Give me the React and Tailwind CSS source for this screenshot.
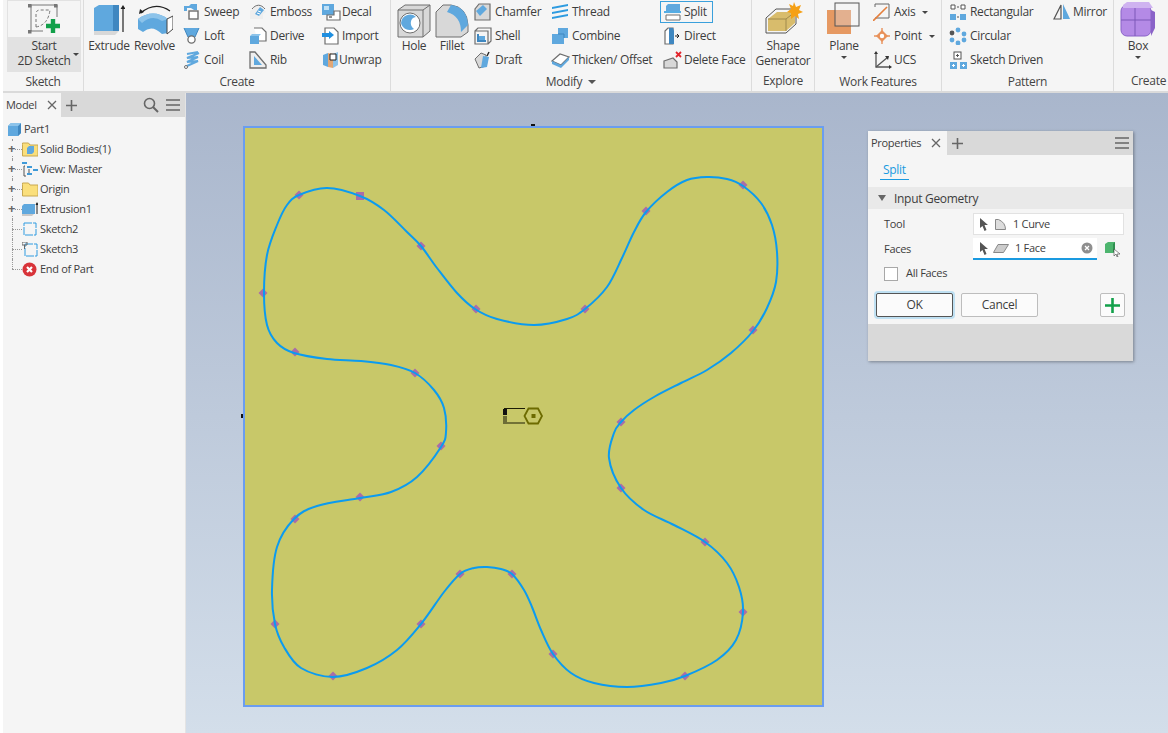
const FONT = "font-['Open_Sans','Noto_Sans',sans-serif]"

const PTS = [
  [299,195],[327,188],[360,196],[384,210],[407,232],[421,246],[437,268],[457,293],[475,309],[497,319],[534,325],[567,319],[585,309],[607,287],[622,258],[634,232],[646,212],[667,192],[687,180],[707,177],[727,179],[743,186],[761,203],[772,225],[777,252],[776,282],[767,308],[753,331],[731,353],[707,370],[681,383],[654,397],[634,410],[621,422],[614,433],[609,458],[621,488],[644,510],[674,525],[705,542],[727,563],[739,587],[743,612],[736,640],[717,660],[685,676],[661,683],[627,687],[594,683],[571,673],[553,654],[541,630],[532,607],[524,590],[512,574],[501,569],[487,567],[474,568],[460,574],[444,592],[421,624],[397,650],[367,668],[333,677],[301,668],[284,647],[275,624],[272,590],[277,547],[294,519],[317,506],[360,498],[391,492],[417,477],[441,447],[446,432],[444,408],[434,390],[415,373],[391,365],[361,361],[327,359],[294,353],[277,343],[267,325],[264,293],[267,255],[277,225],[287,205],
]
const DIAMONDS = [[299,195],[421,246],[476,309],[585,309],[646,211],[743,185],[753,330],[621,422],[621,488],[705,542],[743,612],[685,676],[553,654],[512,574],[460,574],[421,624],[333,676],[275,624],[295,519],[360,497],[441,446],[415,373],[295,352],[263,293]]

function closedSpline(p) {
  const n = p.length
  let d = `M${p[0][0]} ${p[0][1]}`
  for (let i = 0; i < n; i++) {
    const a = p[(i - 1 + n) % n], b = p[i], c = p[(i + 1) % n], e = p[(i + 2) % n]
    d += `C${b[0] + (c[0] - a[0]) / 6} ${b[1] + (c[1] - a[1]) / 6} ${c[0] - (e[0] - b[0]) / 6} ${c[1] - (e[1] - b[1]) / 6} ${c[0]} ${c[1]}`
  }
  return d + 'Z'
}

const I = ({ w = 18, h = 18, children, className = '' }) => (
  <svg width={w} height={h} viewBox={`0 0 ${w} ${h}`} className={`shrink-0 ${className}`}>{children}</svg>
)
const B = '#5fa8de', D = '#3f87c0', G = '#6e6e6e', L = '#d8d8d8'

const icons = {
  sweep: <I><path d="M1 3h5l2-2h6v6h-3L8 5H4v3H1z" fill={B}/><rect x="6" y="8" width="9" height="8" fill="#fff" stroke={G} strokeWidth="1.4"/></I>,
  loft: <I><path d="M1 1h15l-4 9H5z" fill={B}/><path d="M1 1l4 9M16 1l-4 9" stroke={D}/><circle cx="8.5" cy="12.5" r="3.6" fill="#fff" stroke={G} strokeWidth="1.3"/></I>,
  coil: <I><path d="M4 3l11-2M16 2L4 7l11-1-11 5 11-1-11 5" fill="none" stroke={B} strokeWidth="2"/><circle cx="3" cy="16" r="1.5" fill="#fff" stroke={G}/></I>,
  emboss: <I><path d="M1 8L10 1l7 8-3 2v5H1z" fill="#eee"/><path d="M3 6c4-5 9-5 13 0" fill="none" stroke={G}/><path d="M6 11l5-7 4 3-5 6z" fill={B}/><path d="M9 8l3 1M8 10l3 1" stroke="#fff"/></I>,
  derive: <I><path d="M5 1h8l4 4v9H9" fill="#fff" stroke={G} strokeWidth="1.2"/><path d="M1 9h9v8H1z" fill={B}/><path d="M1 9l2-2h9l-2 2z" fill="#8cc3ea"/></I>,
  rib: <I><path d="M1 1h5l11 13v3H1z" fill="#eee" stroke={G} strokeWidth="1.3"/><path d="M5 5l8 9H5z" fill={B}/></I>,
  decal: <I w={20}><rect x="1" y="1" width="12" height="11" fill={B}/><rect x="3" y="3" width="5" height="4" fill="#bfe0f5"/><path d="M13 8h6v9H6v-5h7z" fill="#fff" stroke={G} strokeWidth="1.2"/><path d="M8 14h3" stroke="#222"/></I>,
  import: <I><path d="M4 1h9l4 4v12H4z" fill="#fff" stroke={G} strokeWidth="1.2"/><rect x="1" y="6" width="9" height="4" fill="#1f8fe0"/><path d="M8 4l5 4-5 4z" fill="#1f8fe0"/></I>,
  unwrap: <I><path d="M2 4l5-2v14l-5-2z" fill={B}/><path d="M7 2l5 1v14l-5-1z" fill="#e2a775"/><path d="M12 3l5-2v13l-5 3z" fill="#8cc3ea"/><path d="M9 3h6v6H9z" fill="#fff" stroke="#222"/></I>,
  chamfer: <I><path d="M5 1h11v16H1V6z" fill={L} stroke={G} strokeWidth="1.2"/><path d="M2 8l7-6 4 4-7 7z" fill={B}/></I>,
  shell: <I><path d="M1 4h13v13H1zM1 4l3-3h13v13l-3 3" fill="#f5f5f5" stroke={G} strokeWidth="1.2"/><path d="M3 7h2v6h7v2H3z" fill={D}/><rect x="5" y="9" width="6" height="4" fill={B}/></I>,
  draft: <I><path d="M1 8l6-6 5 2v11l-7 2z" fill={L} stroke={G}/><path d="M9 5l6 1-2 10-6 1z" fill={B}/><path d="M13 5l2-4" stroke="#222" strokeWidth="1.4"/></I>,
  thread: <I><path d="M1 4l16-3v2L1 6zM1 9l16-3v2L1 11zM1 14l16-3v2L1 16z" fill="#2e9be0"/></I>,
  combine: <I><path d="M7 1h10v10h-4v6H1V7h6z" fill={B}/><path d="M7 7h6v4" stroke={D} fill="none"/></I>,
  thicken: <I w={20}><path d="M1 10l8-7 9 3-8 8z" fill="#fff" stroke={G} strokeWidth="1.2"/><path d="M1 10v3l9 4 8-8V6l-8 8z" fill={B}/></I>,
  split: <I w={20}><path d="M3 3l2-2h12v7H3z" fill={B}/><path d="M1 9h17" stroke="#2e9be0" strokeWidth="1.6"/><path d="M3 12h14v5H3z" fill="#fff" stroke={G}/></I>,
  direct: <I><path d="M2 4l3-3h5v16H2z" fill="#fff" stroke={G} strokeWidth="1.2"/><path d="M6 1h4l1 3v13H6z" fill={D}/><path d="M12 9h4M14 7l2 2-2 2" stroke="#222" fill="none"/></I>,
  deleteFace: <I w={20}><path d="M1 10l9-3 4 4v6H1z" fill={L} stroke={G} strokeWidth="1.2"/><path d="M13 1l5 5M18 1l-5 5" stroke="#e3252c" strokeWidth="1.8"/></I>,
  axis: <I><path d="M2 4V1h14v14H2" fill="none" stroke="#666"/><path d="M0 18L14 4" stroke="#e57f3c" strokeWidth="1.6"/></I>,
  point: <I><path d="M9 1v16M1 9h16" stroke="#e8915a" strokeWidth="1.4"/><path d="M9 3l6 6-6 6-6-6z" fill="#e8915a"/><circle cx="9" cy="9" r="2.2" fill="#fff"/></I>,
  ucs: <I w={20} h={20}><path d="M3 3v14h14" fill="none" stroke="#555" strokeWidth="1.3"/><path d="M3 17L15 7" stroke="#555" strokeWidth="1.3"/><path d="M1 4l2-3 2 3zM16 15l3 2-3 2zM12 6l4 0-1 4z" fill="#333"/></I>,
  rectangular: <I><path d="M2 2h4v4H2zM12 2h4v4h-4z" fill="#fff" stroke="#555"/><rect x="11" y="11" width="6" height="6" fill={B}/><rect x="1" y="11" width="6" height="6" fill={B}/><path d="M8 4h2M8 14h2" stroke="#555"/></I>,
  circular: <I><circle cx="9" cy="3" r="2.4" fill={B}/><circle cx="15" cy="7" r="2.4" fill={B}/><circle cx="15" cy="13" r="2.4" fill={B}/><circle cx="9" cy="16" r="2.4" fill={B}/><circle cx="3" cy="13" r="2.4" fill={B}/><circle cx="3" cy="6" r="2.4" fill="#555"/></I>,
  driven: <I w={20}><rect x="5" y="1" width="7" height="7" fill="#fff" stroke="#555"/><path d="M7 4.5h3M8.5 3v3" stroke="#555"/><rect x="1" y="11" width="7" height="7" fill={B}/><rect x="11" y="11" width="7" height="7" fill={B}/><path d="M3 14.5h3M4.5 13v3M13 14.5h3M14.5 13v3" stroke="#fff"/></I>,
  mirror: <I w={20}><path d="M9 2L2 16h7z" fill="none" stroke="#555" strokeWidth="1.2"/><path d="M11 1l7 15h-7z" fill={B}/></I>,
}

function SketchIcon() {
  return (
    <svg width="34" height="36" viewBox="0 0 34 36">
      <path d="M4 4h26M4 4v26M30 4v12M4 30h12" stroke="#777" fill="none"/>
      <path d="M9 26V13q0-4 4-4h10M9 26q12-2 14-17" fill="none" stroke="#777" strokeDasharray="3 2"/>
      {[[3,3],[29,3],[3,29]].map(([x, y]) => <rect key={x + y} x={x - 2} y={y} width="3.5" height="3.5" fill="#777"/>)}
      <path d="M19 25h14M26 18v14" stroke="#12a04a" strokeWidth="4.4"/>
    </svg>
  )
}

function BigIcon({ name }) {
  if (name === 'extrude') return (
    <svg width="32" height="36" viewBox="0 0 32 36">
      <path d="M1 6l5-3h20v26H1z" fill={B}/><path d="M20 3h6v26h-6z" fill={D}/><path d="M1 29h25l-4 4H1z" fill={L}/>
      <path d="M30 30V5" stroke="#222" strokeWidth="1.2"/><path d="M27.5 7l2.5-4 2.5 4z" fill="#222"/>
    </svg>
  )
  if (name === 'revolve') return (
    <svg width="36" height="36" viewBox="0 0 36 36">
      <path d="M4 11Q18 -1 33 9" fill="none" stroke="#222" strokeWidth="1.2"/><path d="M2 12l1-5 4 3z" fill="#222"/>
      <path d="M1 17Q16 6 31 17v14l-6 1Q15 22 6 30l-5-3z" fill={B}/>
      <path d="M1 17Q16 6 31 17l-6 2Q15 12 5 21z" fill="#8cc3ea"/>
      <path d="M30 17l6-3v13l-6 5z" fill="#fff" stroke="#444"/>
    </svg>
  )
  if (name === 'hole') return (
    <svg width="34" height="36" viewBox="0 0 34 36"><path d="M1 8l7-5h25v26l-7 6H1z" fill={L} stroke={G}/><path d="M26 35V8M1 8h25l7-5" stroke={G} fill="none"/><circle cx="13" cy="21" r="10" fill="#fff" stroke={G}/><path d="M4 21a9 9 0 0 1 15-6c-6 0-7 9-2 12a9 9 0 0 1-13-6z" fill={B}/></svg>
  )
  if (name === 'fillet') return (
    <svg width="34" height="36" viewBox="0 0 34 36"><path d="M1 10l7-7h8q16 2 17 20v7l-7 5H1z" fill={L} stroke={G}/><path d="M16 3q16 2 17 20l-7 7q0-16-14-20z" fill={B}/></svg>
  )
  if (name === 'shape') return (
    <svg width="40" height="38" viewBox="0 0 40 38"><path d="M3 17l10-9h20v15l-10 9H3z" fill="none" stroke="#555"/><path d="M5 18l9-7h14l4 4v7l-9 8H5z" fill="#d8bc6c"/><path d="M5 18h18v12M23 18l9-7" stroke="#a08a4c" fill="none"/><path d="M31 1l2 5 5-2-2 5 4 2-5 2 1 5-4-3-4 3 0-6-4-1 4-3-2-5 4 2z" fill="#f5a015"/></svg>
  )
  if (name === 'plane') return (
    <svg width="36" height="36" viewBox="0 0 36 36"><rect x="1" y="8" width="24" height="24" fill="#e69962"/><rect x="9" y="8" width="16" height="16" fill="#e3b08f"/><rect x="9" y="1" width="24" height="23" fill="none" stroke="#555"/></svg>
  )
  return (
    <svg width="36" height="36" viewBox="0 0 36 36"><rect x="1" y="3" width="30" height="31" rx="6" fill="#b48ae6" stroke="#8a63c8"/><path d="M31 8l4 2v16l-4 8z" fill="#8a63c8"/><path d="M1 18h30M15 3v31" stroke="#7d58b8"/><path d="M3 3l4-3h22l4 6H3z" fill="#cfb3f0"/></svg>
  )
}

function BigButton({ name, label, label2, caret, w }) {
  return (
    <div className={`flex flex-col items-center shrink-0 ${w}`}>
      <div className="h-[38px] mt-[1px] flex items-center justify-center"><BigIcon name={name}/></div>
      <div className="mt-[-1px] text-center leading-[15px]">{label}{label2 && <div>{label2}</div>}</div>
      {caret && <div className="mt-[3px] w-0 h-0 border-x-[3px] border-x-transparent border-t-[3px] border-t-[#444]"/>}
    </div>
  )
}

function SmallTool({ icon, label, caret, boxed, className = '' }) {
  return (
    <div className={`h-[24px] flex items-center whitespace-nowrap relative ${className}`}>
      {boxed && <div className="absolute left-[-3px] top-[1px] w-[53px] h-[22px] border border-[#3aa0dc]"/>}
      <div className="w-[21px] h-[18px] flex items-center">{icons[icon]}</div>
      <span>{label}</span>
      {caret && <span className="ml-[7px] w-0 h-0 border-x-[3px] border-x-transparent border-t-[3px] border-t-[#444]"/>}
    </div>
  )
}

function ToolCol({ items, w }) {
  return <div className={`flex flex-col shrink-0 ${w}`}>{items.map(it => <SmallTool key={it.label} {...it}/>)}</div>
}

function Group({ w, label, caret, pl, children }) {
  return (
    <div className={`shrink-0 h-full border-r border-[#dcdcdc] flex flex-col ${w}`}>
      <div className={`h-[72px] flex ${pl}`}>{children}</div>
      <div className="h-[20px] flex items-center justify-center gap-[6px] text-[#444]">
        {label}
        {caret && <span className="w-0 h-0 border-x-[4px] border-x-transparent border-t-[4px] border-t-[#555]"/>}
      </div>
    </div>
  )
}

function Ribbon() {
  return (
    <div className="h-[93px] ml-[3px] bg-[#f5f5f5] border-b-2 border-[#dadada] flex overflow-hidden text-[12px] tracking-[-0.3px] text-[#3d3d3d] shrink-0">
      <Group w="w-[81px]" label="Sketch" pl="pl-[4px]">
        <div className="w-[74px] h-[72px] flex flex-col">
          <div className="h-[37px] flex items-center justify-center border border-[#e2e2e2] border-b-0"><SketchIcon/></div>
          <div className="h-[35px] bg-[#e2e2e2] relative text-center leading-[15px] pt-[1px]">
            Start<br/>2D Sketch
            <span className="absolute right-[2px] top-[16px] w-0 h-0 border-x-[3px] border-x-transparent border-t-[3px] border-t-[#444]"/>
          </div>
        </div>
      </Group>
      <Group w="w-[307px]" label="Create" pl="pl-[3px]">
        <BigButton name="extrude" label="Extrude" w="w-[44px]"/>
        <BigButton name="revolve" label="Revolve" w="w-[47px]"/>
        <div className="w-[5px]"/>
        <ToolCol w="w-[66px]" items={[{ icon: 'sweep', label: 'Sweep' }, { icon: 'loft', label: 'Loft' }, { icon: 'coil', label: 'Coil' }]}/>
        <ToolCol w="w-[72px]" items={[{ icon: 'emboss', label: 'Emboss' }, { icon: 'derive', label: 'Derive' }, { icon: 'rib', label: 'Rib' }]}/>
        <ToolCol w="w-[60px]" items={[{ icon: 'decal', label: 'Decal' }, { icon: 'import', label: 'Import' }, { icon: 'unwrap', label: 'Unwrap' }]}/>
      </Group>
      <Group w="w-[361px]" label="Modify" caret pl="pl-[4px]">
        <BigButton name="hole" label="Hole" w="w-[38px]"/>
        <BigButton name="fillet" label="Fillet" w="w-[38px]"/>
        <div className="w-[3px]"/>
        <ToolCol w="w-[77px]" items={[{ icon: 'chamfer', label: 'Chamfer' }, { icon: 'shell', label: 'Shell' }, { icon: 'draft', label: 'Draft' }]}/>
        <ToolCol w="w-[112px]" items={[{ icon: 'thread', label: 'Thread' }, { icon: 'combine', label: 'Combine' }, { icon: 'thicken', label: 'Thicken/ Offset' }]}/>
        <ToolCol w="w-[88px]" items={[{ icon: 'split', label: 'Split', boxed: true }, { icon: 'direct', label: 'Direct' }, { icon: 'deleteFace', label: 'Delete Face' }]}/>
      </Group>
      <Group w="w-[63px]" label="Explore" pl="pl-0">
        <BigButton name="shape" label="Shape" label2="Generator" w="w-[62px]"/>
      </Group>
      <Group w="w-[127px]" label="Work Features" pl="pl-[8px]">
        <BigButton name="plane" label="Plane" caret w="w-[42px]"/>
        <div className="w-[8px]"/>
        <ToolCol w="w-[68px]" items={[{ icon: 'axis', label: 'Axis', caret: true }, { icon: 'point', label: 'Point', caret: true }, { icon: 'ucs', label: 'UCS' }]}/>
      </Group>
      <Group w="w-[172px]" label="Pattern" pl="pl-[7px]">
        <ToolCol w="w-[103px]" items={[{ icon: 'rectangular', label: 'Rectangular' }, { icon: 'circular', label: 'Circular' }, { icon: 'driven', label: 'Sketch Driven' }]}/>
        <ToolCol w="w-[60px]" items={[{ icon: 'mirror', label: 'Mirror' }]}/>
      </Group>
      <div className="shrink-0 w-[60px] flex flex-col">
        <div className="h-[72px] pl-[6px] flex">
          <BigButton name="box" label="Box" caret w="w-[36px]"/>
        </div>
        <div className="h-[20px] leading-[20px] pl-[17px] text-[#444]">Create</div>
      </div>
    </div>
  )
}

const Cube = ({ s = 15 }) => (
  <svg width={s} height={s} viewBox="0 0 15 15" className="shrink-0"><path d="M1 4l3-3h10v10l-3 3H1z" fill={B}/><path d="M11 4l3-3v10l-3 3z" fill={D}/><path d="M1 4l3-3h10l-3 3z" fill="#8cc3ea"/></svg>
)
const Folder = ({ cube }) => (
  <svg width="16" height="15" viewBox="0 0 16 15" className="shrink-0"><path d="M.5 2.5V1h6l1.500 2h8v11H.5z" fill="#fadf7c" stroke="#c8a850"/>{cube && <path d="M5 6l2-2h5v6l-2 2H5z" fill={B}/>}</svg>
)
const treeIcons = {
  solid: <Folder cube/>,
  origin: <Folder/>,
  view: <svg width="16" height="15" viewBox="0 0 16 15" className="shrink-0"><path d="M0 0h5v2H0zM5 4h5v2H5zM11 7h5v2h-5zM5 11h5v2H5z" fill="#3f9ad8"/><path d="M2 4v10M2 4h1M2 14h2M7 7v4" stroke="#555" fill="none"/></svg>,
  extrusion: <svg width="16" height="15" viewBox="0 0 16 15" className="shrink-0"><path d="M0 4l2-2h11v10H0z" fill={B}/><path d="M0 12h12l-2 2H0z" fill="#c8c8c8"/><path d="M15 12V1" stroke="#222"/><path d="M13.500 3L15 0l1.500 3z" fill="#222"/></svg>,
  sketch: <svg width="16" height="15" viewBox="0 0 16 15" className="shrink-0"><rect x="2" y="1" width="12" height="12" fill="none" stroke="#2e9be0" strokeDasharray="8 1"/></svg>,
  pinned: <svg width="16" height="15" viewBox="0 0 16 15" className="shrink-0"><rect x="3" y="2" width="12" height="12" fill="none" stroke="#2e9be0" strokeDasharray="8 1"/><path d="M0 0h5v3H0zM2.500 3v4" stroke="#666" fill="none"/></svg>,
  end: <svg width="16" height="15" viewBox="0 0 16 15" className="shrink-0"><circle cx="7.500" cy="7.500" r="7" fill="#d8343a"/><path d="M5 5l5 5M10 5l-5 5" stroke="#fff" strokeWidth="2.200"/></svg>,
}

function TreeRow({ icon, label, plus, last }) {
  return (
    <div className="h-[20px] flex items-center relative pl-[19px] gap-[2px]">
      <div className={`absolute left-[9px] top-0 border-l border-dotted border-[#999] ${last ? 'h-[10px]' : 'h-[20px]'}`}/>
      <div className="absolute left-[9px] top-[10px] w-[10px] border-t border-dotted border-[#999]"/>
      {plus && <span className="absolute left-[5px] top-[3px] text-[#666] text-[13px] leading-[13px] font-bold bg-[#f5f5f5]">+</span>}
      {icon}
      <span>{label}</span>
    </div>
  )
}

function ModelPane() {
  return (
    <div className="w-[183px] ml-[3px] shrink-0 bg-[#f5f5f5] border-r border-[#e4e4e4] flex flex-col text-[#3d3d3d] text-[11px] tracking-[-0.3px]">
      <div className="h-[24px] bg-[#d9d9d9] flex items-center shrink-0">
        <div className="w-[58px] h-full bg-[#f5f5f5] flex items-center pl-[3px]">
          Model
          <svg width="10" height="10" viewBox="0 0 10 10" className="ml-[10px]"><path d="M1 1l8 8M9 1l-8 8" stroke="#666" strokeWidth="1.300"/></svg>
        </div>
        <svg width="11" height="11" viewBox="0 0 11 11" className="ml-[5px]"><path d="M5.500 0v11M0 5.500h11" stroke="#666" strokeWidth="1.600"/></svg>
        <svg width="16" height="16" viewBox="0 0 16 16" className="ml-auto"><circle cx="6.500" cy="6.500" r="5" fill="none" stroke="#666" strokeWidth="1.600"/><path d="M10 10l5 5" stroke="#666" strokeWidth="2"/></svg>
        <svg width="14" height="12" viewBox="0 0 14 12" className="ml-[7px] mr-[5px]"><path d="M0 1h14M0 6h14M0 11h14" stroke="#666" strokeWidth="1.600"/></svg>
      </div>
      <div className="pt-[2px]">
        <div className="h-[20px] flex items-center pl-[4px] gap-[2px]"><Cube/><span>Part1</span></div>
        <TreeRow icon={treeIcons.solid} label="Solid Bodies(1)" plus/>
        <TreeRow icon={treeIcons.view} label="View: Master" plus/>
        <TreeRow icon={treeIcons.origin} label="Origin" plus/>
        <TreeRow icon={treeIcons.extrusion} label="Extrusion1" plus/>
        <TreeRow icon={treeIcons.sketch} label="Sketch2"/>
        <TreeRow icon={treeIcons.pinned} label="Sketch3"/>
        <TreeRow icon={treeIcons.end} label="End of Part" last/>
      </div>
    </div>
  )
}

const Arrow = () => (
  <svg width="8" height="13" viewBox="0 0 8 13" className="shrink-0"><path d="M0 0l8 7H4.500l2 5-2 1-2-5L0 10z" fill="#555"/></svg>
)

function PropertiesPanel() {
  return (
    <div className="absolute left-[682px] top-[38px] w-[265px] h-[230px] bg-[#d9d9d9] shadow-[1px_1px_3px_rgba(0,0,0,0.35)] flex flex-col text-[#3d3d3d] text-[11px] tracking-[-0.3px]">
      <div className="h-[24px] flex items-center shrink-0">
        <div className="w-[79px] h-full bg-[#f5f5f5] flex items-center pl-[3px]">
          Properties
          <svg width="10" height="10" viewBox="0 0 10 10" className="ml-[10px]"><path d="M1 1l8 8M9 1l-8 8" stroke="#666" strokeWidth="1.300"/></svg>
        </div>
        <svg width="11" height="11" viewBox="0 0 11 11" className="ml-[5px]"><path d="M5.500 0v11M0 5.500h11" stroke="#666" strokeWidth="1.600"/></svg>
        <svg width="14" height="12" viewBox="0 0 14 12" className="ml-auto mr-[4px]"><path d="M0 1h14M0 6h14M0 11h14" stroke="#666" strokeWidth="1.600"/></svg>
      </div>
      <div className="h-[169px] bg-[#f5f5f5] shrink-0">
        <div className="h-[32px] pl-[12px] pt-[7px]">
          <span className="inline-block px-[3px] pb-[1px] border-b border-[#1a9ae0] text-[#1a9ae0] text-[12px] leading-[16px]">Split</span>
        </div>
        <div className="h-[22px] bg-[#e9e9e9] flex items-center pl-[10px] gap-[8px]">
          <span className="w-0 h-0 border-x-[4px] border-x-transparent border-t-[6px] border-t-[#666]"/>
          <span className="text-[12px] pt-[1px]">Input Geometry</span>
        </div>
        <div className="pl-[16px] pt-[4px] flex items-center h-[26px]">
          <span className="w-[89px]">Tool</span>
          <div className="w-[151px] h-[22px] bg-white border border-[#e2e2e2] flex items-center pl-[6px] gap-[7px]">
            <Arrow/>
            <svg width="11" height="11" viewBox="0 0 11 11"><path d="M.5.5h3q7 3 7 10h-10z" fill="#ddd" stroke="#888"/></svg>
            <span>1 Curve</span>
          </div>
        </div>
        <div className="pl-[16px] flex items-center h-[26px] mt-[1px] relative">
          <span className="w-[89px]">Faces</span>
          <div className="w-[124px] h-[22px] bg-white border-b-2 border-[#1a9ae0] flex items-center pl-[7px] gap-[5px]">
            <Arrow/>
            <svg width="16" height="9" viewBox="0 0 16 9"><path d="M5 .5h10.500l-5 8H.5z" fill="#ccc" stroke="#888"/></svg>
            <span className="ml-[1px]">1 Face</span>
            <svg width="12" height="12" viewBox="0 0 12 12" className="ml-auto mr-[4px]"><circle cx="6" cy="6" r="5.500" fill="#8e8e8e"/><path d="M4 4l4 4M8 4l-4 4" stroke="#fff" strokeWidth="1.300"/></svg>
          </div>
          <svg width="16" height="16" viewBox="0 0 16 16" className="ml-[8px]"><path d="M0 3l3-2h7v9l-2 2H0z" fill="#4db56e"/><path d="M8 3l2-2v9l-2 2z" fill="#2f8f50"/><path d="M9 8l6 5h-3l1 3-1 0-1-3-2 2z" fill="#fff" stroke="#444" strokeWidth=".6"/></svg>
        </div>
        <div className="pl-[16px] h-[23px] flex items-center gap-[8px]">
          <span className="w-[14px] h-[14px] bg-white border border-[#a8a8a8]"/>
          <span>All Faces</span>
        </div>
        <div className="pl-[8px] pr-[8px] mt-[8px] flex items-center">
          <div className="w-[77px] h-[24px] bg-[#fbfbfb] border border-[#555] rounded-[2px] shadow-[0_0_0_2px_#bfe0f2] flex items-center justify-center text-[12px]">OK</div>
          <div className="ml-[8px] w-[77px] h-[24px] bg-[#fbfbfb] border border-[#bdbdbd] rounded-[2px] flex items-center justify-center text-[12px]">Cancel</div>
          <div className="ml-auto w-[25px] h-[24px] bg-[#fbfbfb] border border-[#bdbdbd] rounded-[2px] flex items-center justify-center">
            <svg width="15" height="15" viewBox="0 0 15 15"><path d="M7.500 0v15M0 7.500h15" stroke="#12a04a" strokeWidth="2.600"/></svg>
          </div>
        </div>
      </div>
    </div>
  )
}

function Viewport() {
  return (
    <div className="relative flex-1 bg-gradient-to-b from-[#a9b6cc] to-[#d3deea] overflow-hidden">
      <svg className="absolute left-0 top-0" width="982" height="640" viewBox="186 93 982 640">
        <rect x="244" y="127" width="579" height="579" fill="#c8c869" stroke="#6a9df0" strokeWidth="2"/>
        <path d="M531 125h4M242 414v4" stroke="#111" strokeWidth="2"/>
        {DIAMONDS.map(([x, y]) => <path key={x + '-' + y} d={`M${x} ${y - 4.500}l4.500 4.500-4.500 4.500-4.500-4.500z`} fill="#a96da8"/>)}
        <rect x="356" y="192" width="8" height="8" fill="#a96da8"/>
        <path d={closedSpline(PTS)} fill="none" stroke="#0b9bf0" strokeWidth="2"/>
        <path d="M504 408.500h21M504 423h21" stroke="#1c1c05" strokeWidth="1.200"/>
        <rect x="503" y="409" width="4" height="6" fill="#111"/>
        <rect x="503" y="416" width="4" height="8" fill="#6d6d36"/>
        <path d="M524.500 416l4-7.500h9.500l4 7.500-4 7.500h-9.500z" fill="none" stroke="#6d6b00" strokeWidth="1.800"/>
        <rect x="531.500" y="414" width="4" height="4" fill="#6d6b00"/>
      </svg>
      <PropertiesPanel/>
    </div>
  )
}

export default function App() {
  return (
    <div className={`w-[1168px] h-[733px] bg-white overflow-hidden flex flex-col ${FONT}`}>
      <Ribbon/>
      <div className="flex-1 flex min-h-0">
        <ModelPane/>
        <Viewport/>
      </div>
    </div>
  )
}
